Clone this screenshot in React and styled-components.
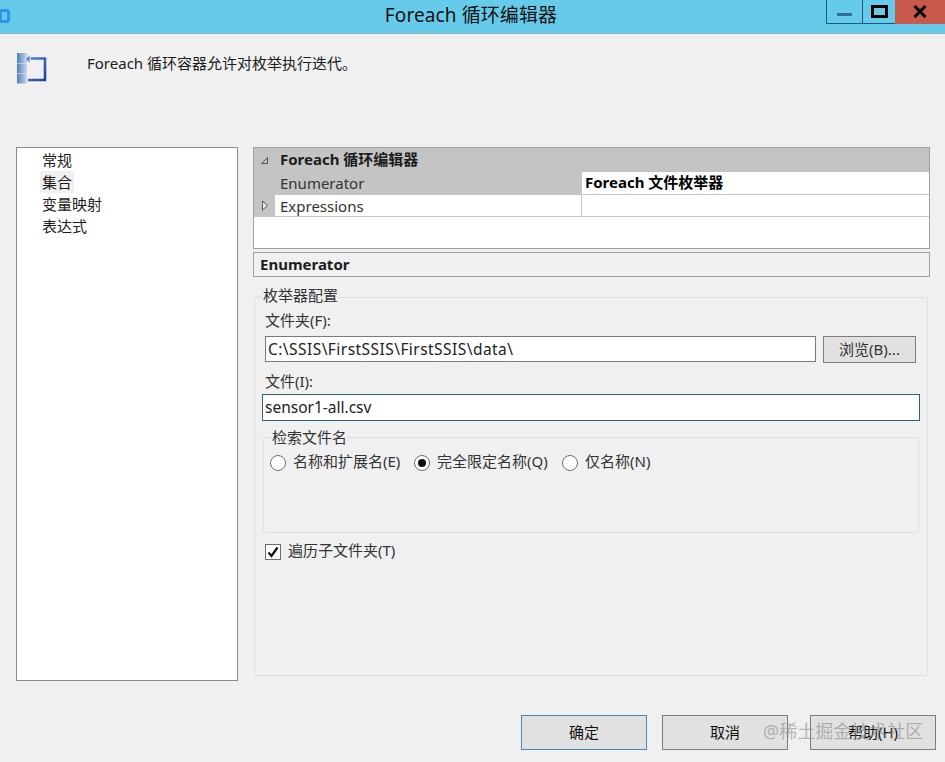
import React from "react";
import styled, { createGlobalStyle } from "styled-components";

const Global = createGlobalStyle`
  html, body { margin: 0; padding: 0; background: #f0f0f0; }
  * { box-sizing: border-box; }
`;

const Dialog = styled.div`
  position: relative;
  width: 945px;
  height: 762px;
  overflow: hidden;
  background: #f0f0f0;
  color: #1c1c1c;
  font-family: "Noto Sans", "Noto Sans CJK SC", sans-serif;
  font-size: 15px;
  line-height: 18px;
`;

const TitleBar = styled.div`
  display: flex;
  align-items: flex-start;
  justify-content: space-between;
  height: 34px;
  background: #66cbea;
  border-bottom: 1px solid #8fb3c0;
`;

const AppGlyph = styled.div`
  width: 11px;
  height: 14px;
  margin: 9px 0 0 -1px;
  border: 3px solid #2f95e6;
  border-radius: 3px;
`;

const Title = styled.div`
  position: absolute;
  top: 3px;
  left: 0;
  width: 942px;
  text-align: center;
  font-size: 19px;
  line-height: 24px;
  letter-spacing: 0.1px;
  color: #111;
`;

const Controls = styled.div`
  display: flex;
  height: 24px;
`;

const Control = styled.div`
  display: flex;
  align-items: center;
  justify-content: center;
  width: ${(p) => p.$w}px;
  border-bottom: 1px solid ${(p) => (p.$close ? "#c75a4d" : "#1d5a76")};
  border-left: ${(p) => (p.$close ? "0" : "1px solid #1d5a76")};
  background: ${(p) => (p.$close ? "#c75a4d" : "transparent")};
`;

const Intro = styled.div`
  display: flex;
  height: 113px;
  padding: 19px 0 0 17px;
`;

const IntroText = styled.div`
  margin: 0 0 0 40px;
  font-size: 15px;
  line-height: 20px;
`;

const Main = styled.div`
  display: flex;
  gap: 15px;
  padding-left: 16px;
`;

const NavList = styled.div`
  display: flex;
  flex-direction: column;
  align-items: flex-start;
  width: 222px;
  height: 534px;
  padding: 1px 0 0 23px;
  background: #fff;
  border: 1px solid #8a8a8a;
`;

const NavItem = styled.div`
  height: 22px;
  padding: 0 2px;
  font-size: 15px;
  line-height: 22px;
  background: ${(p) => (p.$active ? "#f0f0f0" : "transparent")};
`;

const Right = styled.div`
  width: 677px;
`;

const Grid = styled.div`
  height: 102px;
  background: #fff;
  border: 1px solid #a0a0a0;
`;

const GridHeader = styled.div`
  display: flex;
  align-items: center;
  height: 24px;
  background: #c4c4c4;
  font-weight: 700;
`;

const GridHeading = styled.span`
  padding: 0 0 3px 5px;
`;

const GridRow = styled.div`
  display: flex;
  height: ${(p) => p.$h}px;
  border-bottom: 1px solid ${(p) => (p.$plain ? "#c8c8c8" : "#c4c4c4")};
`;

const Gutter = styled.div`
  display: flex;
  align-items: center;
  justify-content: center;
  flex: none;
  width: 21px;
  background: #c4c4c4;
`;

const NameCell = styled.div`
  display: flex;
  align-items: center;
  width: 307px;
  padding-left: 5px;
  background: ${(p) => (p.$selected ? "#c4c4c4" : "#fff")};
  border-right: 1px solid #c8c8c8;
  color: #333;
`;

const ValueCell = styled.div`
  flex: 1;
  padding-left: 3px;
  font-weight: 700;
  line-height: 21px;
  color: #000;
`;

const CategoryBar = styled.div`
  height: 25px;
  margin-top: 3px;
  padding-left: 6px;
  font-weight: 700;
  line-height: 23px;
  background: #f0f0f0;
  border: 1px solid #a0a0a0;
`;

const Group = styled.fieldset`
  margin: ${(p) => p.$margin};
  padding: ${(p) => p.$padding};
  width: ${(p) => p.$w}px;
  height: ${(p) => p.$h}px;
  min-width: 0;
  border: 1px solid #e1e1e1;
  border-radius: 2px;
`;

const Legend = styled.legend`
  margin-left: ${(p) => p.$left}px;
  padding: 0;
  height: 18px;
  line-height: ${(p) => p.$line}px;
  color: #333;
`;

const FieldLabel = styled.div`
  margin: ${(p) => p.$margin};
  line-height: 16px;
  height: 18px;
  color: #333;
`;

const FieldRow = styled.div`
  display: flex;
  gap: 7px;
  margin: 6px 0 0 3px;
`;

const TextBox = styled.div`
  flex: none;
  width: ${(p) => p.$w}px;
  height: ${(p) => p.$h}px;
  margin-top: ${(p) => p.$top}px;
  padding-left: ${(p) => p.$pad}px;
  background: #fff;
  border: 1px solid ${(p) => (p.$focus ? "#2d6486" : "#7a7a7a")};
  font-size: 15.5px;
  letter-spacing: ${(p) => p.$spacing}px;
  line-height: ${(p) => p.$h - 2}px;
  color: #222;
`;

const Button = styled.div`
  display: flex;
  align-items: center;
  justify-content: center;
  flex: none;
  width: ${(p) => p.$w}px;
  height: ${(p) => p.$h}px;
  margin-right: ${(p) => p.$after || 0}px;
  padding-bottom: 2px;
  background: #e1e1e1;
  border: 1px solid ${(p) => (p.$primary ? "#3f8cbc" : "#7d7d7d")};
  color: ${(p) => (p.$dark ? "#111" : "#333")};
`;

const RadioRow = styled.div`
  display: flex;
  margin: 6px 0 0 6px;
`;

const RadioOption = styled.div`
  display: flex;
  align-items: center;
  gap: 7px;
  width: ${(p) => p.$w}px;
  color: #333;
`;

const OptionText = styled.span`
  padding-bottom: 3px;
`;

const RadioMark = styled.span`
  display: flex;
  align-items: center;
  justify-content: center;
  flex: none;
  width: 16px;
  height: 16px;
  background: #fff;
  border: 1px solid #6e6e6e;
  border-radius: 50%;
`;

const RadioDot = styled.span`
  width: 8px;
  height: 8px;
  background: #111;
  border-radius: 50%;
`;

const CheckRow = styled.div`
  display: flex;
  align-items: center;
  gap: 7px;
  margin: 8px 0 0 3px;
  color: #333;
`;

const CheckMark = styled.span`
  display: flex;
  align-items: center;
  justify-content: center;
  width: 16px;
  height: 16px;
  background: #fff;
  border: 1px solid #6e6e6e;
`;

const Footer = styled.div`
  display: flex;
  justify-content: flex-end;
  gap: 15px;
  margin-top: 34px;
  padding-right: 9px;
`;

const Watermark = styled.div`
  position: absolute;
  left: 763px;
  top: 719px;
  font-size: 18px;
  line-height: 24px;
  white-space: nowrap;
  color: rgba(140, 140, 140, 0.62);
`;

const LoopIcon = () => (
  <svg width="30" height="31" viewBox="0 0 30 31">
    <defs>
      <linearGradient id="blocks" x1="0" y1="0" x2="1" y2="0">
        <stop offset="0" stopColor="#4f7fc0" />
        <stop offset="1" stopColor="#c9d9ec" />
      </linearGradient>
      <linearGradient id="loop" x1="0" y1="0" x2="1" y2="1">
        <stop offset="0" stopColor="#5c8ad0" />
        <stop offset="1" stopColor="#1f3f96" />
      </linearGradient>
    </defs>
    <rect x="0" y="0" width="10" height="10" fill="url(#blocks)" />
    <rect x="0" y="10.5" width="10" height="9.5" fill="url(#blocks)" />
    <rect x="0" y="20.5" width="10" height="10" fill="url(#blocks)" />
    <path d="M11 5.5H28V27H11" fill="none" stroke="url(#loop)" strokeWidth="2.6" />
    <path d="M8 6 L13 1.5 V10.5Z" fill="#5c8ad0" stroke="#fff" strokeWidth="0.8" />
  </svg>
);

const ExpandedGlyph = () => (
  <svg width="9" height="9" viewBox="0 0 9 9">
    <path d="M7.5 1.5V7.5H1.5Z" fill="none" stroke="#555" />
  </svg>
);

const CollapsedGlyph = () => (
  <svg width="8" height="11" viewBox="0 0 8 11">
    <path d="M1.5 1V10L6.5 5.5Z" fill="#eee" stroke="#555" />
  </svg>
);

const nav = ["常规", "集合", "变量映射", "表达式"];

const radios = [
  { label: "名称和扩展名(E)", w: 144 },
  { label: "完全限定名称(Q)", w: 148, on: true },
  { label: "仅名称(N)", w: 100 },
];

export default function App() {
  return (
    <Dialog>
      <Global />
      <TitleBar>
        <AppGlyph />
        <Title>Foreach 循环编辑器</Title>
        <Controls>
          <Control $w={36}>
            <svg width="16" height="12" viewBox="0 0 16 12">
              <rect x="0" y="7" width="15" height="3" fill="#2f6f96" />
            </svg>
          </Control>
          <Control $w={33}>
            <svg width="17" height="14" viewBox="0 0 17 14">
              <rect x="1.5" y="1.5" width="14" height="10" fill="none" stroke="#000" strokeWidth="3" />
            </svg>
          </Control>
          <Control $w={50} $close>
            <svg width="14" height="13" viewBox="0 0 14 13">
              <path d="M1.5 1L12.5 12M12.5 1L1.5 12" stroke="#000" strokeWidth="3" />
            </svg>
          </Control>
        </Controls>
      </TitleBar>

      <Intro>
        <LoopIcon />
        <IntroText>Foreach 循环容器允许对枚举执行迭代。</IntroText>
      </Intro>

      <Main>
        <NavList>
          {nav.map((item) => (
            <NavItem key={item} $active={item === "集合"}>{item}</NavItem>
          ))}
        </NavList>

        <Right>
          <Grid>
            <GridHeader>
              <Gutter><ExpandedGlyph /></Gutter>
              <GridHeading>Foreach 循环编辑器</GridHeading>
            </GridHeader>
            <GridRow $h={23}>
              <Gutter />
              <NameCell $selected>Enumerator</NameCell>
              <ValueCell>Foreach 文件枚举器</ValueCell>
            </GridRow>
            <GridRow $h={22} $plain>
              <Gutter><CollapsedGlyph /></Gutter>
              <NameCell>Expressions</NameCell>
              <ValueCell />
            </GridRow>
          </Grid>

          <CategoryBar>Enumerator</CategoryBar>

          <Group $w={674} $h={388} $margin="11px 0 0 1px" $padding="0 0 0 7px">
            <Legend $left={1} $line={15}>枚举器配置</Legend>
            <FieldLabel $margin="6px 0 0 3px">文件夹(F):</FieldLabel>
            <FieldRow>
              <TextBox $w={551} $h={26} $pad={2} $spacing={0.45} $top={0}>C:\SSIS\FirstSSIS\FirstSSIS\data\</TextBox>
              <Button $w={93} $h={27}>浏览(B)...</Button>
            </FieldRow>
            <FieldLabel $margin="10px 0 0 3px">文件(I):</FieldLabel>
            <TextBox $w={658} $h={27} $pad={2} $spacing={0} $top={3} $focus>sensor1-all.csv</TextBox>

            <Group $w={656} $h={105} $margin="7px 0 0 1px" $padding="0">
              <Legend $left={8} $line={18}>检索文件名</Legend>
              <RadioRow>
                {radios.map((r) => (
                  <RadioOption key={r.label} $w={r.w}>
                    <RadioMark>{r.on && <RadioDot />}</RadioMark>
                    <OptionText>{r.label}</OptionText>
                  </RadioOption>
                ))}
              </RadioRow>
            </Group>

            <CheckRow>
              <CheckMark>
                <svg width="12" height="12" viewBox="0 0 12 12">
                  <path d="M1.5 6.5L4.5 10L10.5 1.5" fill="none" stroke="#111" strokeWidth="2.2" />
                </svg>
              </CheckMark>
              <OptionText>遍历子文件夹(T)</OptionText>
            </CheckRow>
          </Group>
        </Right>
      </Main>

      <Footer>
        <Button $w={126} $h={35} $primary $dark>确定</Button>
        <Button $w={126} $h={35} $dark $after={7}>取消</Button>
        <Button $w={126} $h={35} $dark>帮助(H)</Button>
      </Footer>

      <Watermark>@稀土掘金技术社区</Watermark>
    </Dialog>
  );
}
